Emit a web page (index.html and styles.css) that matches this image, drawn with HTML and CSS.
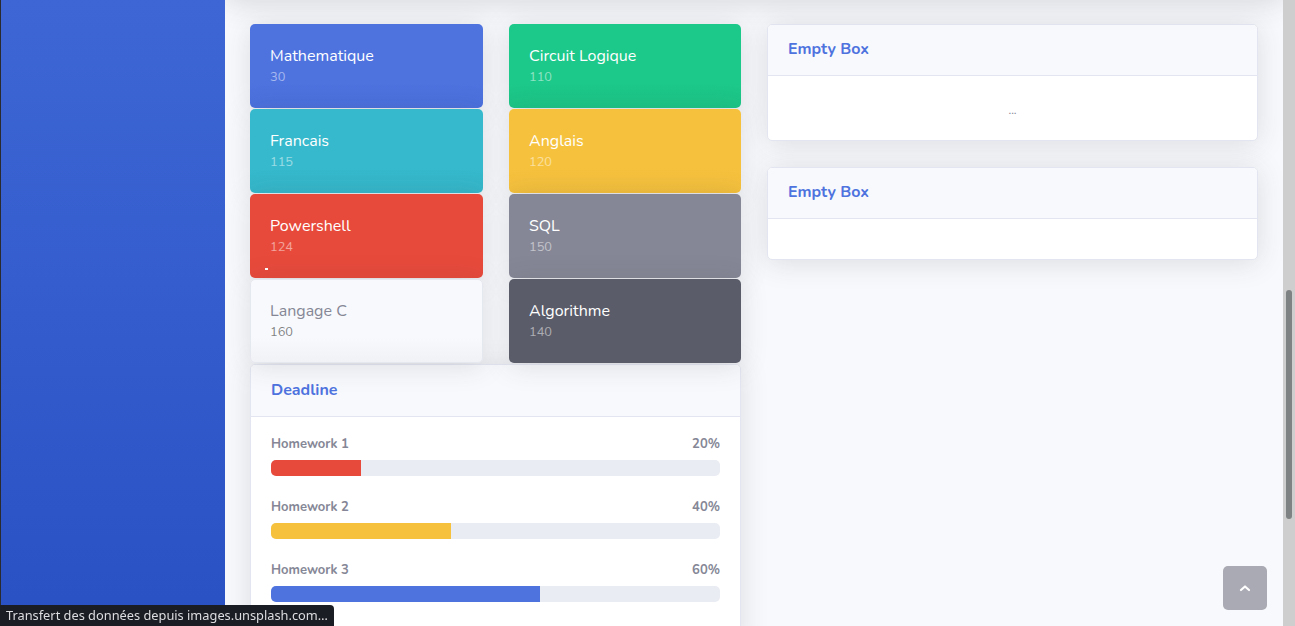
FILE: index.html
```html
<!DOCTYPE html>
<html lang="fr">
<head>
<meta charset="utf-8">
<title>Dashboard</title>
<link rel="stylesheet" href="styles.css">
</head>
<body>
<div class="wrapper">
  <aside class="sidebar"></aside>
  <main class="content">
    <div class="grid">
      <div class="left-col">
        <div class="tiles">
          <div class="tile bg-primary"><div class="tile-title">Mathematique</div><div class="tile-num">30</div></div>
          <div class="tile bg-success"><div class="tile-title">Circuit Logique</div><div class="tile-num">110</div></div>
          <div class="tile bg-info"><div class="tile-title">Francais</div><div class="tile-num">115</div></div>
          <div class="tile bg-warning"><div class="tile-title">Anglais</div><div class="tile-num">120</div></div>
          <div class="tile bg-danger"><div class="tile-title">Powershell</div><div class="tile-num">124</div><span class="tick"></span></div>
          <div class="tile bg-secondary"><div class="tile-title">SQL</div><div class="tile-num">150</div></div>
          <div class="tile bg-light"><div class="tile-title">Langage C</div><div class="tile-num">160</div></div>
          <div class="tile bg-dark"><div class="tile-title">Algorithme</div><div class="tile-num">140</div></div>
        </div>
        <section class="card">
          <header class="card-header deadline-header"><h6>Deadline</h6></header>
          <div class="card-body">
            <div class="hw">
              <div class="hw-label"><span>Homework 1</span><span>20%</span></div>
              <div class="progress"><div class="bar bar-danger" style="width:20%"></div></div>
            </div>
            <div class="hw">
              <div class="hw-label"><span>Homework 2</span><span>40%</span></div>
              <div class="progress"><div class="bar bar-warning" style="width:40%"></div></div>
            </div>
            <div class="hw">
              <div class="hw-label"><span>Homework 3</span><span>60%</span></div>
              <div class="progress"><div class="bar bar-primary" style="width:60%"></div></div>
            </div>
          </div>
        </section>
      </div>
      <div class="right-col">
        <section class="card">
          <header class="card-header"><h6>Empty Box</h6></header>
          <div class="card-body center"><span class="dots">...</span></div>
        </section>
        <section class="card">
          <header class="card-header"><h6>Empty Box</h6></header>
          <div class="card-body"></div>
        </section>
      </div>
    </div>
  </main>
  <div class="scrollbar"><div class="thumb"></div></div>
</div>
<a class="scroll-top" href="#">
  <svg width="12" height="8" viewBox="0 0 12 8"><polyline points="2,6 6,2.5 10,6" fill="none" stroke="#fff" stroke-width="2.2" stroke-linecap="round" stroke-linejoin="round"/></svg>
</a>
<div class="status">Transfert des données depuis images.unsplash.com…</div>
</body>
</html>
```

FILE: styles.css
```css
* { box-sizing: border-box; }
html, body { margin: 0; height: 100%; }
body {
  font-family: "Nunito", "Open Sans", "Noto Sans", sans-serif;
  background: #f8f9fc;
  overflow: hidden;
  color: #858796;
}
.wrapper {
  display: flex;
  height: 626px;
}
.sidebar {
  width: 225px;
  flex: 0 0 225px;
  background: linear-gradient(180deg, #3e67d5 0%, #2a51c4 100%);
  border-left: 1px solid #2a2b2e;
}
.content {
  flex: 1;
  position: relative;
  padding: 24px 25px 0 25px;
  background: #f8f9fc;
  overflow: hidden;
}
.content::before {
  content: "";
  position: absolute;
  left: 0; right: 0; top: -60px;
  height: 60px;
  box-shadow: 0 .15rem 1.75rem 0 rgba(58,59,69,.18);
  background: #fff;
}
.grid {
  display: grid;
  grid-template-columns: 491px 491px;
  column-gap: 26px;
  align-items: start;
}
.tiles {
  display: grid;
  grid-template-columns: 233px 232px;
  column-gap: 26px;
  row-gap: 1px;
  margin-bottom: 1px;
}
.tile {
  position: relative;
  height: 84px;
  padding: 21px 20px 19px;
  border-radius: 5px;
  box-shadow: 0 .15rem 1.75rem 0 rgba(58,59,69,.15);
  color: #fff;
}
.tile-title {
  font-size: 16px;
  line-height: 22px;
}
.tile-num {
  font-size: 12.8px;
  line-height: 20px;
  color: rgba(255,255,255,.5);
}
.bg-primary { background: linear-gradient(180deg, #4e73df 70%, #4b70dd 100%); }
.bg-success { background: linear-gradient(180deg, #1cc88a 70%, #1cc586 100%); }
.bg-info { background: linear-gradient(180deg, #36b9cc 70%, #35b6c9 100%); }
.bg-warning { background: linear-gradient(180deg, #f6c23e 70%, #f3bf3c 100%); }
.bg-danger { background: #e74a3b; }
.bg-secondary { background: #858796; }
.bg-dark { background: #5a5c69; }
.bg-light { background: linear-gradient(180deg, #f8f9fc 70%, #f1f2f6 100%); color: #858796; border: 1px solid #e6e8ef; padding: 20px 19px 18px; }
.bg-light .tile-num { color: rgba(0,0,0,.5); }
.tick {
  position: absolute;
  left: 15px;
  bottom: 8px;
  width: 3px; height: 2px;
  background: #fff;
}
.card {
  background: #fff;
  border: 1px solid #e3e6f0;
  border-radius: 5px;
  box-shadow: 0 .15rem 1.75rem 0 rgba(58,59,69,.15);
  overflow: hidden;
}
.right-col {
  display: flex;
  flex-direction: column;
  gap: 26px;
}
.card-header {
  background: #f8f9fc;
  border-bottom: 1px solid #e3e6f0;
  padding: 15px 20px 16px;
}
.deadline-header { padding: 16px 20px 16px; }
.card-header h6 {
  margin: 0;
  font-size: 16px;
  line-height: 19px;
  font-weight: 700;
  color: #4e73df;
}
.card-body {
  padding: 20px;
  min-height: 40px;
}
.card-body.center {
  display: flex;
  justify-content: center;
  padding: 22px 20px 18px;
}
.dots {
  font-size: 12px;
  line-height: 24px;
  color: #858796;
}
.hw { margin-bottom: 24px; }
.hw-label {
  display: flex;
  justify-content: space-between;
  font-size: 13px;
  line-height: 15px;
  font-weight: 700;
  color: #858796;
  margin-bottom: 8px;
}
.progress {
  height: 16px;
  background: #eaecf4;
  border-radius: 5px;
  overflow: hidden;
}
.bar { height: 100%; }
.bar-danger { background: #e74a3b; }
.bar-warning { background: #f6c23e; }
.bar-primary { background: #4e73df; }
.scrollbar {
  width: 12px;
  flex: 0 0 12px;
  background: #cecece;
  padding: 290px 3px 0 3px;
}
.thumb {
  width: 6px;
  height: 229px;
  border-radius: 3px;
  background: #7e8282;
}
.scroll-top {
  position: fixed;
  left: 1223px;
  top: 566px;
  width: 44px;
  height: 44px;
  border-radius: 5px;
  background: rgba(90,92,105,.5);
  display: flex;
  align-items: center;
  justify-content: center;
}
.status {
  position: fixed;
  left: 0;
  bottom: 0;
  height: 21px;
  padding: 1px 6px 0;
  background: #1b1d24;
  color: #dcdde0;
  font-family: "Noto Sans", "DejaVu Sans", sans-serif;
  font-size: 12.8px;
  line-height: 18px;
  border-top-right-radius: 4px;
  white-space: nowrap;
}
```
